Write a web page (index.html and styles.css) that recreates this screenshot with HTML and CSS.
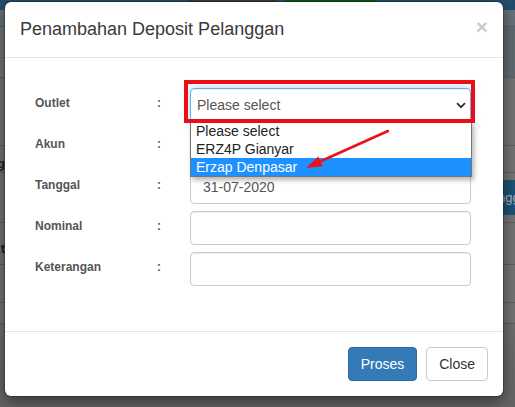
FILE: index.html
```html
<!DOCTYPE html>
<html>
<head>
<meta charset="utf-8">
<link rel="stylesheet" href="styles.css">
</head>
<body>
<div class="page">
  <div class="topbar">
    <span class="seg seg-blue-a"></span>
    <span class="seg seg-dark"></span>
    <span class="seg seg-blue-b"></span>
    <span class="seg seg-green"></span>
  </div>
  <div class="strip s1"></div>
  <div class="strip s2"><div class="right-panel"></div></div>
  <div class="strip s3"></div>
  <div class="strip s4"><div class="clip-left">Tag</div></div>
  <div class="strip s5"><div class="bg-btn">Pelanggan</div></div>
  <div class="strip s6"><div class="clip-left">Text</div></div>
  <div class="strip s7"></div>
  <div class="strip s8"></div>
  <div class="strip s9"></div>
</div>

<div class="modal">
  <div class="modal-header">
    <h4 class="modal-title">Penambahan Deposit Pelanggan</h4>
    <span class="close">×</span>
  </div>
  <div class="modal-body">
    <div class="form-grid">
      <label class="lbl">Outlet</label><span class="colon">:</span>
      <div class="select-wrap">
        <div class="select">
          <span>Please select</span>
          <svg class="chev" width="10" height="7" viewBox="0 0 10 7"><path d="M1 1.2 L5 5.2 L9 1.2" fill="none" stroke="#333" stroke-width="1.8"/></svg>
        </div>
        <ul class="dropdown">
          <li>Please select</li>
          <li>ERZ4P Gianyar</li>
          <li class="active">Erzap Denpasar</li>
        </ul>
        <div class="annot-box"></div>
      </div>

      <label class="lbl">Akun</label><span class="colon">:</span>
      <div class="input"></div>

      <label class="lbl">Tanggal</label><span class="colon">:</span>
      <div class="input">31-07-2020</div>

      <label class="lbl">Nominal</label><span class="colon">:</span>
      <div class="input"></div>

      <label class="lbl">Keterangan</label><span class="colon">:</span>
      <div class="input"></div>
    </div>
  </div>
  <div class="modal-footer">
    <button class="btn btn-primary">Proses</button>
    <button class="btn btn-default">Close</button>
  </div>
</div>

<svg class="arrow" width="100" height="56" viewBox="298 122 100 56">
  <line x1="388" y1="131" x2="319" y2="162" stroke="#e8141c" stroke-width="2.6" stroke-linecap="round"/>
  <polygon points="306,168 322.7,166.2 318.3,156.6" fill="#e8141c"/>
</svg>
</body>
</html>
```

FILE: styles.css
```css
* { box-sizing: border-box; }
html, body { margin: 0; padding: 0; }
body {
  width: 515px;
  height: 407px;
  overflow: hidden;
  background: #6c6c6c;
  font-family: "Liberation Sans", Arial, sans-serif;
  position: relative;
}

/* dimmed page behind the modal */
.page { display: flex; flex-direction: column; height: 407px; }
.topbar { height: 10px; background: #234e6b; display: flex; }
.seg { display: block; height: 10px; }
.seg-blue-a { width: 187px; }
.seg-dark { width: 89px; background: #3a3a3a; }
.seg-blue-b { width: 9px; }
.seg-green { width: 92px; background: #0d5619; }
.strip { border-top: 1px solid #5e5e5e; background: #737373; display: flex; }
.s1 { height: 16px; border-top: none; background: #65717a; }
.s2 { height: 51px; justify-content: flex-end; }
.right-panel { width: 20px; background: #5f6b71; }
.s3 { height: 68px; }
.s4 { height: 27px; padding-top: 10px; }
.s5 { height: 50px; padding: 7px 0 0 472px; }
.s6 { height: 42px; padding-top: 18px; }
.s7 { height: 38px; }
.s8 { height: 21px; }
.s9 { flex: 1; background: linear-gradient(#6e6e6e, #646464); }
.clip-left {
  width: 5px; overflow: hidden; display: flex; justify-content: flex-end;
  white-space: nowrap; font-size: 13px; color: #1e1e1e; font-weight: bold; line-height: 15px;
}
.bg-btn {
  height: 35px; width: 80px; background: #1d5274; color: #a7b4bd;
  font-size: 13px; line-height: 35px; white-space: nowrap;
}

/* modal */
.modal {
  position: absolute;
  left: 5px; top: 2px; width: 498px;
  background: #fff;
  border-radius: 6px;
  box-shadow: 0 0 0 1px rgba(0,0,0,.2), 0 5px 15px rgba(0,0,0,.5);
}
.modal-header {
  display: flex; justify-content: space-between; align-items: flex-start;
  padding: 15px 15px 15px 15px;
  border-bottom: 1px solid #e5e5e5;
}
.modal-title {
  margin: 0; font-size: 18px; line-height: 25px; font-weight: normal; color: #3a3a3a;
}
.close {
  font-size: 21px; font-weight: bold; line-height: 1; color: #000; opacity: .2; margin-top: -1px;
}
.modal-body { padding: 30px 32px 45px 30px; }
.form-grid {
  display: grid;
  grid-template-columns: 122px 33px 281px;
  grid-auto-rows: 34px;
  row-gap: 7px;
}
.lbl, .colon {
  font-size: 12px; font-weight: bold; color: #555; line-height: 17px; padding-top: 7px;
}
.input {
  height: 34px; border: 1px solid #ccc; border-radius: 4px;
  box-shadow: inset 0 1px 1px rgba(0,0,0,.075);
  font-size: 14px; color: #555; line-height: 32px; padding: 0 12px;
}
.select-wrap { position: relative; }
.select {
  height: 34px; border: 1px solid #66afe9; border-radius: 4px;
  box-shadow: inset 0 1px 1px rgba(0,0,0,.075), 0 0 8px rgba(102,175,233,.6);
  font-size: 14px; color: #555; line-height: 32px; padding: 0 4px 0 6px;
  display: flex; justify-content: space-between; align-items: center;
}
.dropdown {
  position: absolute; left: 0; top: 33px; width: 282px; margin: 0; padding: 0;
  list-style: none; background: #fff; border: 1px solid #767676;
  box-shadow: 2px 3px 5px rgba(0,0,0,.3);
  z-index: 2;
}
.dropdown li {
  font-size: 14px; line-height: 18px; height: 18px; padding-left: 5px; color: #222;
}
.dropdown li.active { background: #1e90ff; color: #fff; }
.annot-box {
  position: absolute; left: -6px; top: -8px; width: 291px; height: 43px;
  border: 4px solid #ec0e16; z-index: 3;
}

.modal-footer {
  border-top: 1px solid #e5e5e5; padding: 15px;
  display: flex; justify-content: flex-end; gap: 9px;
}
.btn {
  font-family: "Liberation Sans", Arial, sans-serif;
  font-size: 14px; line-height: 20px; padding: 6px 12px; border-radius: 4px;
  border: 1px solid transparent; margin: 0;
}
.btn-primary { background: #337ab7; border-color: #2e6da4; color: #fff; }
.btn-default { background: #fff; border-color: #ccc; color: #333; }

.arrow { position: absolute; left: 298px; top: 122px; z-index: 5; }
```
